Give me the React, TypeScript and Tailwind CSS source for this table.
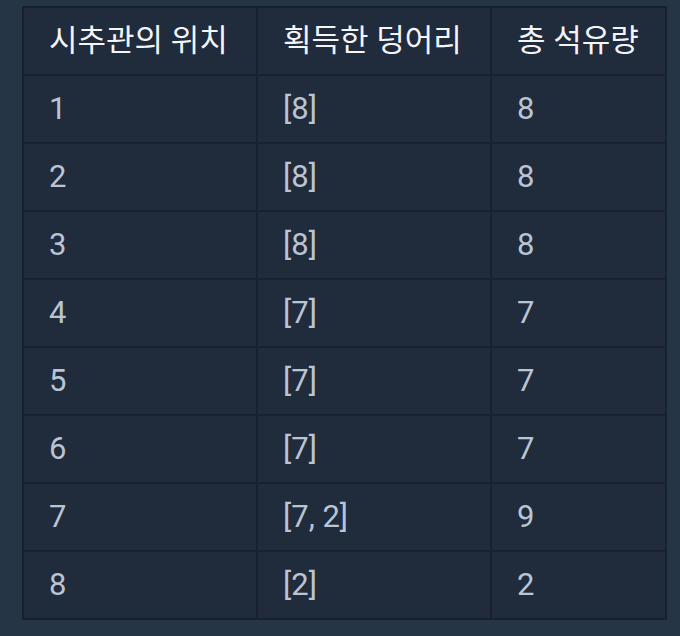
const rows: [string, string, string][] = [
  ["1", "[8]", "8"],
  ["2", "[8]", "8"],
  ["3", "[8]", "8"],
  ["4", "[7]", "7"],
  ["5", "[7]", "7"],
  ["6", "[7]", "7"],
  ["7", "[7, 2]", "9"],
  ["8", "[2]", "2"],
];

export default function App() {
  return (
    <div
      className="h-[636px] w-[680px] bg-[#263545] pl-[22px] pt-[6px]"
      style={{ fontFamily: 'Roboto, "Noto Sans CJK KR", sans-serif' }}
    >
      <table className="w-[645px] table-fixed border-collapse border-2 border-[#172130] bg-[#202b3c] text-[31px] leading-[40px]">
        <colgroup>
          <col className="w-[234px]" />
          <col className="w-[234px]" />
          <col />
        </colgroup>
        <thead>
          <tr className="h-[68px]">
            {["시추관의 위치", "획득한 덩어리", "총 석유량"].map((h) => (
              <th key={h} className="border-2 border-[#172130] px-[25px] text-left font-normal whitespace-nowrap text-[#f3f5f8]">
                {h}
              </th>
            ))}
          </tr>
        </thead>
        <tbody>
          {rows.map((r) => (
            <tr key={r[0]} className="h-[68px]">
              {r.map((c, i) => (
                <td key={i} className="border-2 border-[#172130] px-[25px] text-left whitespace-nowrap text-[#b9c5d3]">
                  {c}
                </td>
              ))}
            </tr>
          ))}
        </tbody>
      </table>
    </div>
  );
}
